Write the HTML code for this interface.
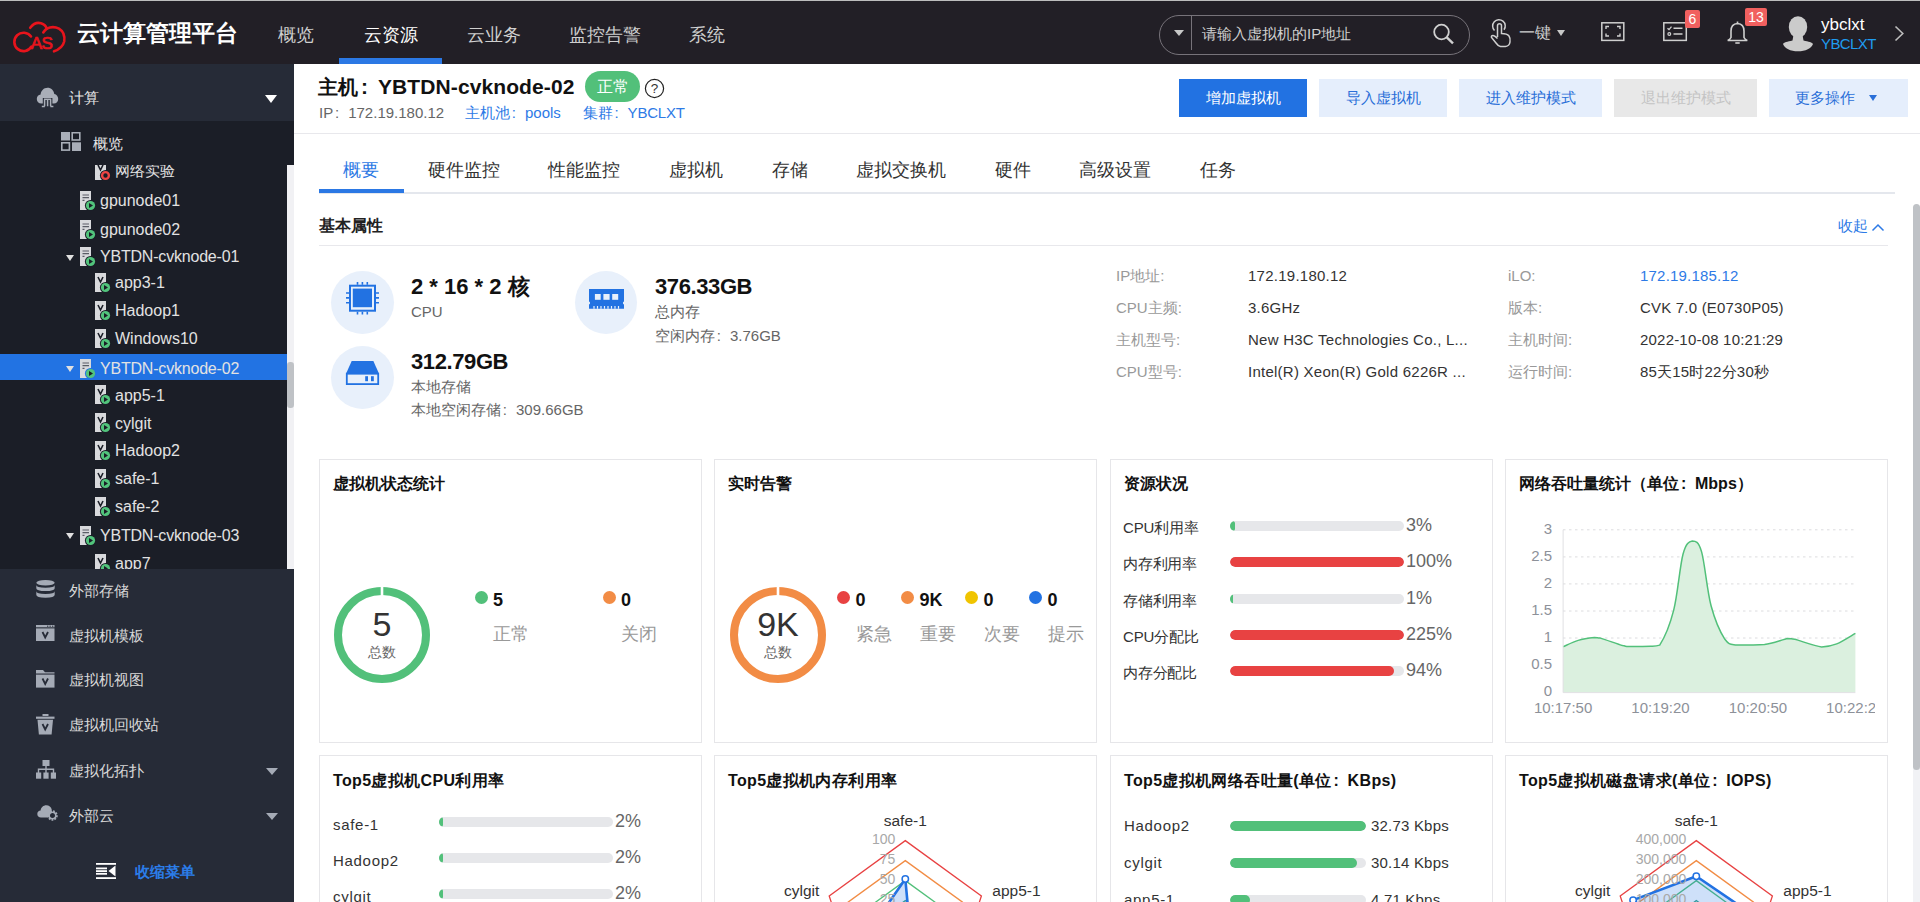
<!DOCTYPE html>
<html><head><meta charset="utf-8">
<style>
*{box-sizing:border-box;margin:0;padding:0}
html,body{width:1920px;height:902px;overflow:hidden;background:#fff;font-family:"Liberation Sans",sans-serif;color:#333}
.a{position:absolute;white-space:nowrap}
.fc{display:inline-block;width:1em;padding-left:0.12em}
#hdr{position:absolute;left:0;top:0;width:1920px;height:64px;background:#221f26}
#topline{position:absolute;left:0;top:0;width:1920px;height:1px;background:#bdbdbd}
.nav{position:absolute;top:22px;font-size:18px;line-height:26px;color:#cfcfcf}
#side{position:absolute;left:0;top:64px;width:294px;height:838px;background:#262b37}
#tree{position:absolute;left:0;top:121px;width:294px;height:448px;background:#1b1e27;overflow:hidden}
.ti{position:absolute;font-size:16px;line-height:20px;color:#e2e2e2;white-space:nowrap}
.mi{position:absolute;left:69px;font-size:15px;line-height:20px;color:#d8d8d8;white-space:nowrap}
</style></head><body>
<div class="a" style="left:294px;top:64px;width:1626px;height:838px;background:#fff"></div>
<div class="a" style="left:294px;top:133px;width:1626px;height:1px;background:#e8e8ec"></div>
<div class="a" style="left:318px;top:72px;font-size:20px;line-height:30px;font-weight:bold;color:#111">主机</div>
<div class="a" style="left:361px;top:71.6px;font-size:21px;line-height:30px;font-weight:bold;color:#111">:</div>
<div class="a" style="left:378px;top:71.6px;font-size:21px;line-height:30px;font-weight:bold;color:#111;letter-spacing:0.1px">YBTDN-cvknode-02</div>
<div class="a" style="left:585px;top:71px;width:55px;height:31px;border-radius:15.5px;background:#52c07a;color:#fff;font-size:16px;line-height:32px;text-align:center">正常</div>
<svg class="a" style="left:644px;top:78px" width="21" height="21" viewBox="0 0 21 21"><circle cx="10.5" cy="10.5" r="9.1" fill="none" stroke="#222" stroke-width="1.2"/><text x="10.5" y="15.3" text-anchor="middle" font-family="Liberation Sans" font-size="13.5" fill="#333">?</text></svg>
<div class="a" style="left:319px;top:103px;font-size:15px;line-height:20px;color:#666">IP<span class="fc">:</span>172.19.180.12</div>
<div class="a" style="left:465px;top:103px;font-size:15px;line-height:20px;color:#2d7ae6">主机池<span class="fc">:</span>pools</div>
<div class="a" style="left:583px;top:103px;font-size:15px;line-height:20px;color:#2d7ae6;letter-spacing:-0.2px">集群<span class="fc">:</span>YBCLXT</div>
<div class="a" style="left:1179px;top:79px;width:128px;height:38px;background:#2272e2;color:#fff;font-size:15px;line-height:38px;text-align:center;font-weight:500;">增加虚拟机</div>
<div class="a" style="left:1319px;top:79px;width:128px;height:38px;background:#e5eefc;color:#2a6fd8;font-size:15px;line-height:38px;text-align:center;">导入虚拟机</div>
<div class="a" style="left:1459px;top:79px;width:143px;height:38px;background:#e5eefc;color:#2a6fd8;font-size:15px;line-height:38px;text-align:center;">进入维护模式</div>
<div class="a" style="left:1614px;top:79px;width:143px;height:38px;background:#e8e8e8;color:#c4c4c4;font-size:15px;line-height:38px;text-align:center;">退出维护模式</div>
<div class="a" style="left:1769px;top:79px;width:139px;height:38px;background:#e5eefc;color:#2a6fd8;font-size:15px;line-height:38px;padding-left:26px">更多操作</div>
<div class="a" style="left:1869px;top:95px;width:0;height:0;border-left:4.5px solid transparent;border-right:4.5px solid transparent;border-top:6px solid #2a6fd8"></div>
<div class="a" style="left:319px;top:192px;width:1576px;height:2px;background:#e4e7ed"></div>
<div class="a" style="left:319.00px;top:157px;width:84.60px;text-align:center;font-size:18px;line-height:26px;color:#2b78e4">概要</div>
<div class="a" style="left:319.00px;top:189px;width:84.60px;height:4px;background:#2b78e4"></div>
<div class="a" style="left:403.60px;top:157px;width:120.60px;text-align:center;font-size:18px;line-height:26px;color:#333">硬件监控</div>
<div class="a" style="left:524.20px;top:157px;width:120.60px;text-align:center;font-size:18px;line-height:26px;color:#333">性能监控</div>
<div class="a" style="left:644.80px;top:157px;width:102.60px;text-align:center;font-size:18px;line-height:26px;color:#333">虚拟机</div>
<div class="a" style="left:747.40px;top:157px;width:84.60px;text-align:center;font-size:18px;line-height:26px;color:#333">存储</div>
<div class="a" style="left:832.00px;top:157px;width:138.60px;text-align:center;font-size:18px;line-height:26px;color:#333">虚拟交换机</div>
<div class="a" style="left:970.60px;top:157px;width:84.60px;text-align:center;font-size:18px;line-height:26px;color:#333">硬件</div>
<div class="a" style="left:1055.20px;top:157px;width:120.60px;text-align:center;font-size:18px;line-height:26px;color:#333">高级设置</div>
<div class="a" style="left:1175.80px;top:157px;width:84.60px;text-align:center;font-size:18px;line-height:26px;color:#333">任务</div>
<div class="a" style="left:319px;top:216px;font-size:16px;line-height:20px;font-weight:bold;color:#222">基本属性</div>
<div class="a" style="left:1838px;top:216px;font-size:15px;line-height:20px;color:#2d7ae6">收起</div>
<svg class="a" style="left:1871px;top:222px" width="14" height="10" viewBox="0 0 14 10"><path d="M1.5 8.5 L7 3 L12.5 8.5" fill="none" stroke="#2d7ae6" stroke-width="1.5"/></svg>
<div class="a" style="left:319px;top:245px;width:1569px;height:1px;background:#e8e8ec"></div>
<div class="a" style="left:331px;top:271px;width:63px;height:63px;border-radius:50%;background:#e8f0fb"></div>
<div class="a" style="left:575px;top:271px;width:62px;height:63px;border-radius:50%;background:#e8f0fb"></div>
<div class="a" style="left:331px;top:346px;width:63px;height:63px;border-radius:50%;background:#e8f0fb"></div>
<svg class="a" style="left:345px;top:281px" width="35" height="35" viewBox="0 0 35 35"><rect x="5" y="4.7" width="25" height="25" fill="none" stroke="#2272e2" stroke-width="2"/><rect x="7.8" y="7.6" width="19.2" height="18.6" fill="#2272e2"/><path d="M12.5 1 V3.7 M17.4 1 V3.7 M22.3 1 V3.7 M12.5 30.7 V33.5 M17.4 30.7 V33.5 M22.3 30.7 V33.5 M1 12 H4 M1 16.9 H4 M1 21.8 H4 M31 12 H34 M31 16.9 H34 M31 21.8 H34" stroke="#2272e2" stroke-width="1.6"/></svg>
<svg class="a" style="left:588px;top:288px" width="37" height="22" viewBox="0 0 37 22"><path d="M1 1 H36 V13.5 A1.6 1.6 0 0 0 36 16.5 V20.7 H1 V16.5 A1.6 1.6 0 0 0 1 13.5 Z" fill="#2272e2"/><rect x="6.9" y="6" width="5.8" height="5.8" fill="#e8f0fb"/><rect x="15.4" y="6" width="6.2" height="5.8" fill="#e8f0fb"/><rect x="24.2" y="6" width="6" height="5.8" fill="#e8f0fb"/><path d="M6 18 V20.7 M9.5 18 V20.7 M13 18 V20.7 M16.5 18 V20.7 M20 18 V20.7 M23.5 18 V20.7 M27 18 V20.7 M30.5 18 V20.7" stroke="#e8f0fb" stroke-width="1.2"/></svg>
<svg class="a" style="left:345px;top:360px" width="35" height="26" viewBox="0 0 35 26"><path d="M6.7 1 H28.4 L34 13.7 H1 Z" fill="#2272e2"/><rect x="1.8" y="13.7" width="31.4" height="10.4" fill="none" stroke="#2272e2" stroke-width="1.8"/><rect x="20.2" y="16.2" width="2.8" height="5" fill="#2272e2"/><rect x="26" y="16.2" width="2.8" height="5" fill="#2272e2"/></svg>
<div class="a" style="left:411px;top:273px;font-size:22px;line-height:28px;font-weight:bold;color:#111">2 * 16 * 2 核</div>
<div class="a" style="left:411px;top:302px;font-size:15px;line-height:20px;color:#666">CPU</div>
<div class="a" style="left:655px;top:273px;font-size:22px;line-height:28px;font-weight:bold;color:#111;letter-spacing:-0.4px">376.33GB</div>
<div class="a" style="left:655px;top:302px;font-size:15px;line-height:20px;color:#666">总内存</div>
<div class="a" style="left:655px;top:326px;font-size:15px;line-height:20px;color:#666">空闲内存<span class="fc">:</span>3.76GB</div>
<div class="a" style="left:411px;top:348px;font-size:22px;line-height:28px;font-weight:bold;color:#111;letter-spacing:-0.4px">312.79GB</div>
<div class="a" style="left:411px;top:377px;font-size:15px;line-height:20px;color:#666">本地存储</div>
<div class="a" style="left:411px;top:400px;font-size:15px;line-height:20px;color:#666">本地空闲存储<span class="fc">:</span>309.66GB</div>
<div class="a" style="left:1116px;top:265.5px;font-size:15px;line-height:20px;color:#999">IP地址:</div>
<div class="a" style="left:1248px;top:265.5px;font-size:15px;line-height:20px;color:#333;letter-spacing:0.25px">172.19.180.12</div>
<div class="a" style="left:1508px;top:265.5px;font-size:15px;line-height:20px;color:#999">iLO:</div>
<div class="a" style="left:1640px;top:265.5px;font-size:15px;line-height:20px;color:#2d7ae6;letter-spacing:0.2px">172.19.185.12</div>
<div class="a" style="left:1116px;top:297.8px;font-size:15px;line-height:20px;color:#999">CPU主频:</div>
<div class="a" style="left:1248px;top:297.8px;font-size:15px;line-height:20px;color:#333;letter-spacing:0.25px">3.6GHz</div>
<div class="a" style="left:1508px;top:297.8px;font-size:15px;line-height:20px;color:#999">版本:</div>
<div class="a" style="left:1640px;top:297.8px;font-size:15px;line-height:20px;color:#333;letter-spacing:0.2px">CVK 7.0 (E0730P05)</div>
<div class="a" style="left:1116px;top:330.1px;font-size:15px;line-height:20px;color:#999">主机型号:</div>
<div class="a" style="left:1248px;top:330.1px;font-size:15px;line-height:20px;color:#333;letter-spacing:0.25px">New H3C Technologies Co., L...</div>
<div class="a" style="left:1508px;top:330.1px;font-size:15px;line-height:20px;color:#999">主机时间:</div>
<div class="a" style="left:1640px;top:330.1px;font-size:15px;line-height:20px;color:#333;letter-spacing:0.2px">2022-10-08 10:21:29</div>
<div class="a" style="left:1116px;top:362.4px;font-size:15px;line-height:20px;color:#999">CPU型号:</div>
<div class="a" style="left:1248px;top:362.4px;font-size:15px;line-height:20px;color:#333;letter-spacing:0.25px">Intel(R) Xeon(R) Gold 6226R ...</div>
<div class="a" style="left:1508px;top:362.4px;font-size:15px;line-height:20px;color:#999">运行时间:</div>
<div class="a" style="left:1640px;top:362.4px;font-size:15px;line-height:20px;color:#333;letter-spacing:0.2px">85天15时22分30秒</div>
<div class="a" style="left:319px;top:459px;width:383px;height:284px;border:1px solid #e6e6e9"></div>
<div class="a" style="left:319px;top:755px;width:383px;height:200px;border:1px solid #e6e6e9"></div>
<div class="a" style="left:714px;top:459px;width:383px;height:284px;border:1px solid #e6e6e9"></div>
<div class="a" style="left:714px;top:755px;width:383px;height:200px;border:1px solid #e6e6e9"></div>
<div class="a" style="left:1110px;top:459px;width:383px;height:284px;border:1px solid #e6e6e9"></div>
<div class="a" style="left:1110px;top:755px;width:383px;height:200px;border:1px solid #e6e6e9"></div>
<div class="a" style="left:1505px;top:459px;width:383px;height:284px;border:1px solid #e6e6e9"></div>
<div class="a" style="left:1505px;top:755px;width:383px;height:200px;border:1px solid #e6e6e9"></div>
<div class="a" style="left:333px;top:474px;font-size:16px;line-height:20px;font-weight:bold;color:#111">虚拟机状态统计</div>
<div class="a" style="left:728px;top:474px;font-size:16px;line-height:20px;font-weight:bold;color:#111">实时告警</div>
<div class="a" style="left:1124px;top:474px;font-size:16px;line-height:20px;font-weight:bold;color:#111">资源状况</div>
<div class="a" style="left:1519px;top:474px;font-size:16px;line-height:20px;font-weight:bold;color:#111">网络吞吐量统计（单位<span class="fc">:</span>Mbps）</div>
<div class="a" style="left:333px;top:771px;font-size:16px;line-height:20px;font-weight:bold;color:#111;letter-spacing:0.35px">Top5虚拟机CPU利用率</div>
<div class="a" style="left:728px;top:771px;font-size:16px;line-height:20px;font-weight:bold;color:#111;letter-spacing:0.35px">Top5虚拟机内存利用率</div>
<div class="a" style="left:1124px;top:771px;font-size:16px;line-height:20px;font-weight:bold;color:#111;letter-spacing:0.35px">Top5虚拟机网络吞吐量(单位<span class="fc">:</span>KBps)</div>
<div class="a" style="left:1519px;top:771px;font-size:16px;line-height:20px;font-weight:bold;color:#111;letter-spacing:0.35px">Top5虚拟机磁盘请求(单位<span class="fc">:</span>IOPS)</div>
<svg class="a" style="left:332px;top:584.5px" width="100" height="100" viewBox="0 0 100 100"><circle cx="50" cy="50" r="44" fill="none" stroke="#52c07a" stroke-width="8"/><rect x="48.7" y="0" width="2.6" height="12" fill="#fff"/></svg>
<div class="a" style="left:332px;top:603.5px;width:100px;text-align:center;font-size:34px;line-height:40px;color:#333">5</div>
<div class="a" style="left:332px;top:641.5px;width:100px;text-align:center;font-size:14px;line-height:20px;color:#666">总数</div>
<svg class="a" style="left:728px;top:584.5px" width="100" height="100" viewBox="0 0 100 100"><circle cx="50" cy="50" r="44" fill="none" stroke="#f28c45" stroke-width="8"/><rect x="48.7" y="0" width="2.6" height="12" fill="#fff"/></svg>
<div class="a" style="left:728px;top:603.5px;width:100px;text-align:center;font-size:34px;line-height:40px;color:#333">9K</div>
<div class="a" style="left:728px;top:641.5px;width:100px;text-align:center;font-size:14px;line-height:20px;color:#666">总数</div>
<div class="a" style="left:474.5px;top:590.5px;width:13px;height:13px;border-radius:50%;background:#52c07a"></div>
<div class="a" style="left:493px;top:588px;font-size:18px;line-height:24px;font-weight:bold;color:#111">5</div>
<div class="a" style="left:493px;top:622px;font-size:18px;line-height:24px;color:#999">正常</div>
<div class="a" style="left:602.5px;top:590.5px;width:13px;height:13px;border-radius:50%;background:#f28c45"></div>
<div class="a" style="left:621px;top:588px;font-size:18px;line-height:24px;font-weight:bold;color:#111">0</div>
<div class="a" style="left:621px;top:622px;font-size:18px;line-height:24px;color:#999">关闭</div>
<div class="a" style="left:837.0px;top:590.5px;width:13px;height:13px;border-radius:50%;background:#e84242"></div>
<div class="a" style="left:855.5px;top:588px;font-size:18px;line-height:24px;font-weight:bold;color:#111">0</div>
<div class="a" style="left:855.5px;top:622px;font-size:18px;line-height:24px;color:#999">紧急</div>
<div class="a" style="left:901.0px;top:590.5px;width:13px;height:13px;border-radius:50%;background:#f28c45"></div>
<div class="a" style="left:919.5px;top:588px;font-size:18px;line-height:24px;font-weight:bold;color:#111">9K</div>
<div class="a" style="left:919.5px;top:622px;font-size:18px;line-height:24px;color:#999">重要</div>
<div class="a" style="left:965.0px;top:590.5px;width:13px;height:13px;border-radius:50%;background:#f0c400"></div>
<div class="a" style="left:983.5px;top:588px;font-size:18px;line-height:24px;font-weight:bold;color:#111">0</div>
<div class="a" style="left:983.5px;top:622px;font-size:18px;line-height:24px;color:#999">次要</div>
<div class="a" style="left:1029.0px;top:590.5px;width:13px;height:13px;border-radius:50%;background:#2272e2"></div>
<div class="a" style="left:1047.5px;top:588px;font-size:18px;line-height:24px;font-weight:bold;color:#111">0</div>
<div class="a" style="left:1047.5px;top:622px;font-size:18px;line-height:24px;color:#999">提示</div>
<div class="a" style="left:1123px;top:518.0px;font-size:15px;line-height:20px;color:#333;letter-spacing:-0.2px">CPU利用率</div>
<div class="a" style="left:1230px;top:521.0px;width:174px;height:10px;border-radius:5px;background:#e6e7ea;overflow:hidden"><div style="width:5.2px;height:10px;border-radius:5px;background:#52c07a"></div></div>
<div class="a" style="left:1406px;top:513.0px;font-size:18px;line-height:24px;color:#666">3%</div>
<div class="a" style="left:1123px;top:554.3px;font-size:15px;line-height:20px;color:#333;letter-spacing:-0.2px">内存利用率</div>
<div class="a" style="left:1230px;top:557.3px;width:174px;height:10px;border-radius:5px;background:#e6e7ea;overflow:hidden"><div style="width:174.0px;height:10px;border-radius:5px;background:#e84242"></div></div>
<div class="a" style="left:1406px;top:549.3px;font-size:18px;line-height:24px;color:#666">100%</div>
<div class="a" style="left:1123px;top:590.6px;font-size:15px;line-height:20px;color:#333;letter-spacing:-0.2px">存储利用率</div>
<div class="a" style="left:1230px;top:593.6px;width:174px;height:10px;border-radius:5px;background:#e6e7ea;overflow:hidden"><div style="width:3.0px;height:10px;border-radius:5px;background:#52c07a"></div></div>
<div class="a" style="left:1406px;top:585.6px;font-size:18px;line-height:24px;color:#666">1%</div>
<div class="a" style="left:1123px;top:626.9px;font-size:15px;line-height:20px;color:#333;letter-spacing:-0.2px">CPU分配比</div>
<div class="a" style="left:1230px;top:629.9px;width:174px;height:10px;border-radius:5px;background:#e6e7ea;overflow:hidden"><div style="width:174.0px;height:10px;border-radius:5px;background:#e84242"></div></div>
<div class="a" style="left:1406px;top:621.9px;font-size:18px;line-height:24px;color:#666">225%</div>
<div class="a" style="left:1123px;top:663.2px;font-size:15px;line-height:20px;color:#333;letter-spacing:-0.2px">内存分配比</div>
<div class="a" style="left:1230px;top:666.2px;width:174px;height:10px;border-radius:5px;background:#e6e7ea;overflow:hidden"><div style="width:163.6px;height:10px;border-radius:5px;background:#e84242"></div></div>
<div class="a" style="left:1406px;top:658.2px;font-size:18px;line-height:24px;color:#666">94%</div>
<div class="a" style="left:333px;top:815.0px;font-size:15px;line-height:20px;color:#333;letter-spacing:0.7px">safe-1</div>
<div class="a" style="left:439px;top:817.0px;width:174px;height:10px;border-radius:5px;background:#e6e7ea;overflow:hidden"><div style="width:4px;height:10px;border-radius:5px;background:#52c07a"></div></div>
<div class="a" style="left:615px;top:809.0px;font-size:18px;line-height:24px;color:#666">2%</div>
<div class="a" style="left:333px;top:851.0px;font-size:15px;line-height:20px;color:#333;letter-spacing:0.7px">Hadoop2</div>
<div class="a" style="left:439px;top:853.0px;width:174px;height:10px;border-radius:5px;background:#e6e7ea;overflow:hidden"><div style="width:4px;height:10px;border-radius:5px;background:#52c07a"></div></div>
<div class="a" style="left:615px;top:845.0px;font-size:18px;line-height:24px;color:#666">2%</div>
<div class="a" style="left:333px;top:887.0px;font-size:15px;line-height:20px;color:#333;letter-spacing:0.7px">cylgit</div>
<div class="a" style="left:439px;top:889.0px;width:174px;height:10px;border-radius:5px;background:#e6e7ea;overflow:hidden"><div style="width:4px;height:10px;border-radius:5px;background:#52c07a"></div></div>
<div class="a" style="left:615px;top:881.0px;font-size:18px;line-height:24px;color:#666">2%</div>
<div class="a" style="left:1124px;top:815.5px;font-size:15px;line-height:20px;color:#333;letter-spacing:0.7px">Hadoop2</div>
<div class="a" style="left:1230px;top:820.5px;width:136px;height:10px;border-radius:5px;background:#e6e7ea;overflow:hidden"><div style="width:136.0px;height:10px;border-radius:5px;background:#52c07a"></div></div>
<div class="a" style="left:1371px;top:815.5px;font-size:15px;line-height:20px;color:#333;letter-spacing:0.2px">32.73 Kbps</div>
<div class="a" style="left:1124px;top:852.8px;font-size:15px;line-height:20px;color:#333;letter-spacing:0.7px">cylgit</div>
<div class="a" style="left:1230px;top:857.8px;width:136px;height:10px;border-radius:5px;background:#e6e7ea;overflow:hidden"><div style="width:126.5px;height:10px;border-radius:5px;background:#52c07a"></div></div>
<div class="a" style="left:1371px;top:852.8px;font-size:15px;line-height:20px;color:#333;letter-spacing:0.2px">30.14 Kbps</div>
<div class="a" style="left:1124px;top:890.1px;font-size:15px;line-height:20px;color:#333;letter-spacing:0.7px">app5-1</div>
<div class="a" style="left:1230px;top:895.1px;width:136px;height:10px;border-radius:5px;background:#e6e7ea;overflow:hidden"><div style="width:20.4px;height:10px;border-radius:5px;background:#52c07a"></div></div>
<div class="a" style="left:1371px;top:890.1px;font-size:15px;line-height:20px;color:#333;letter-spacing:0.2px">4.71 Kbps</div>
<div class="a" style="left:1505px;top:459px;width:370px;height:284px;overflow:hidden"><svg class="a" style="left:0;top:0" width="383" height="284" viewBox="0 0 383 284"><text x="47" y="236.9" text-anchor="end" font-family="Liberation Sans" font-size="15" fill="#8d9199">0</text><path d="M58 206.1 H350.4" stroke="#dcdcdf" stroke-width="1" stroke-dasharray="2.5 3.5"/><text x="47" y="209.9" text-anchor="end" font-family="Liberation Sans" font-size="15" fill="#8d9199">0.5</text><path d="M58 179.0 H350.4" stroke="#dcdcdf" stroke-width="1" stroke-dasharray="2.5 3.5"/><text x="47" y="182.8" text-anchor="end" font-family="Liberation Sans" font-size="15" fill="#8d9199">1</text><path d="M58 152.0 H350.4" stroke="#dcdcdf" stroke-width="1" stroke-dasharray="2.5 3.5"/><text x="47" y="155.8" text-anchor="end" font-family="Liberation Sans" font-size="15" fill="#8d9199">1.5</text><path d="M58 124.9 H350.4" stroke="#dcdcdf" stroke-width="1" stroke-dasharray="2.5 3.5"/><text x="47" y="128.7" text-anchor="end" font-family="Liberation Sans" font-size="15" fill="#8d9199">2</text><path d="M58 97.9 H350.4" stroke="#dcdcdf" stroke-width="1" stroke-dasharray="2.5 3.5"/><text x="47" y="101.7" text-anchor="end" font-family="Liberation Sans" font-size="15" fill="#8d9199">2.5</text><path d="M58 70.8 H350.4" stroke="#dcdcdf" stroke-width="1" stroke-dasharray="2.5 3.5"/><text x="47" y="74.6" text-anchor="end" font-family="Liberation Sans" font-size="15" fill="#8d9199">3</text><path d="M58.1 187.7 C60.6 186.7 68.0 182.9 73.2 181.4 C78.4 179.9 85.8 179.0 89.5 178.6 C93.2 178.6 90.6 178.6 95.3 179.1 C100.0 180.4 112.6 185.1 117.5 186.5 C122.4 187.5 119.8 187.4 124.5 187.5 C129.2 187.5 140.4 187.5 145.4 187.3 C150.4 187.1 150.8 187.3 154.7 186.1 C158.6 180.1 164.8 166.3 168.7 151.1 C172.6 136.0 174.9 106.7 178.0 95.2 C181.1 83.7 184.2 82.4 187.3 82.0 C190.4 82.0 193.5 82.1 196.6 92.9 C199.7 103.6 202.1 131.9 206.0 146.5 C209.9 161.1 215.6 173.7 219.9 180.3 C224.2 186.1 225.0 185.2 231.6 186.1 C238.2 186.1 251.0 186.1 259.5 185.6 C268.0 184.5 277.7 180.5 282.8 179.6 C287.8 179.6 284.2 179.6 289.8 180.3 C295.4 181.7 309.6 187.1 316.6 187.9 C323.6 187.9 326.1 187.1 331.7 184.9 C337.3 182.6 347.3 176.1 350.4 174.4 L350.4000000000001 233.10000000000002 L58.09999999999991 233.10000000000002 Z" fill="#dbf0df"/><path d="M58.1 187.7 C60.6 186.7 68.0 182.9 73.2 181.4 C78.4 179.9 85.8 179.0 89.5 178.6 C93.2 178.6 90.6 178.6 95.3 179.1 C100.0 180.4 112.6 185.1 117.5 186.5 C122.4 187.5 119.8 187.4 124.5 187.5 C129.2 187.5 140.4 187.5 145.4 187.3 C150.4 187.1 150.8 187.3 154.7 186.1 C158.6 180.1 164.8 166.3 168.7 151.1 C172.6 136.0 174.9 106.7 178.0 95.2 C181.1 83.7 184.2 82.4 187.3 82.0 C190.4 82.0 193.5 82.1 196.6 92.9 C199.7 103.6 202.1 131.9 206.0 146.5 C209.9 161.1 215.6 173.7 219.9 180.3 C224.2 186.1 225.0 185.2 231.6 186.1 C238.2 186.1 251.0 186.1 259.5 185.6 C268.0 184.5 277.7 180.5 282.8 179.6 C287.8 179.6 284.2 179.6 289.8 180.3 C295.4 181.7 309.6 187.1 316.6 187.9 C323.6 187.9 326.1 187.1 331.7 184.9 C337.3 182.6 347.3 176.1 350.4 174.4" fill="none" stroke="#52c07a" stroke-width="1.5"/><path d="M58.1 70.79999999999995 V233.60000000000002 H350.4" fill="none" stroke="#e0e0e3" stroke-width="1"/><text x="58.1" y="254" text-anchor="middle" font-family="Liberation Sans" font-size="15" fill="#8d9199">10:17:50</text><text x="155.5" y="254" text-anchor="middle" font-family="Liberation Sans" font-size="15" fill="#8d9199">10:19:20</text><text x="252.9" y="254" text-anchor="middle" font-family="Liberation Sans" font-size="15" fill="#8d9199">10:20:50</text><text x="350.3" y="254" text-anchor="middle" font-family="Liberation Sans" font-size="15" fill="#8d9199">10:22:20</text></svg></div>
<div class="a" style="left:714px;top:755px;width:383px;height:147px;overflow:hidden"><svg class="a" style="left:0;top:0" width="383" height="200" viewBox="0 0 383 200"><polygon points="191.3,85.6 267.4,140.9 238.3,230.3 144.3,230.3 115.2,140.9" fill="none" stroke="#e84242" stroke-width="1.3"/><polygon points="191.3,105.6 248.4,147.1 226.6,214.1 156.0,214.1 134.2,147.1" fill="none" stroke="#f28c45" stroke-width="1.3"/><polygon points="191.3,125.6 229.3,153.2 214.8,198.0 167.8,198.0 153.3,153.2" fill="none" stroke="#52c07a" stroke-width="1.3"/><polygon points="191.3,145.6 210.3,159.4 203.1,181.8 179.5,181.8 172.3,159.4" fill="none" stroke="#3aa58a" stroke-width="1.3"/><polygon points="191.3,124.0 195.1,164.4 196.0,172.1 181.9,178.5 167.7,157.9" fill="rgba(34,114,226,0.22)" stroke="#2272e2" stroke-width="2.6" stroke-linejoin="round"/><circle cx="191.3" cy="124.0" r="3.2" fill="#fff" stroke="#2272e2" stroke-width="1.5"/><circle cx="195.1" cy="164.4" r="3.2" fill="#fff" stroke="#2272e2" stroke-width="1.5"/><circle cx="196.0" cy="172.1" r="3.2" fill="#fff" stroke="#2272e2" stroke-width="1.5"/><circle cx="181.9" cy="178.5" r="3.2" fill="#fff" stroke="#2272e2" stroke-width="1.5"/><circle cx="167.7" cy="157.9" r="3.2" fill="#fff" stroke="#2272e2" stroke-width="1.5"/><text x="181.3" y="89.1" text-anchor="end" font-family="Liberation Sans" font-size="14" fill="#a8a8a8">100</text><text x="181.3" y="109.1" text-anchor="end" font-family="Liberation Sans" font-size="14" fill="#a8a8a8">75</text><text x="181.3" y="129.1" text-anchor="end" font-family="Liberation Sans" font-size="14" fill="#a8a8a8">50</text><text x="181.3" y="149.1" text-anchor="end" font-family="Liberation Sans" font-size="14" fill="#a8a8a8">25</text><text x="191.3" y="70.8" text-anchor="middle" font-family="Liberation Sans" font-size="15.5" fill="#333">safe-1</text><text x="105.3" y="140.6" text-anchor="end" font-family="Liberation Sans" font-size="15.5" fill="#333">cylgit</text><text x="278.3" y="140.6" text-anchor="start" font-family="Liberation Sans" font-size="15.5" fill="#333">app5-1</text></svg></div>
<div class="a" style="left:1505px;top:755px;width:383px;height:147px;overflow:hidden"><svg class="a" style="left:0;top:0" width="383" height="200" viewBox="0 0 383 200"><polygon points="191.3,85.6 267.4,140.9 238.3,230.3 144.3,230.3 115.2,140.9" fill="none" stroke="#e84242" stroke-width="1.3"/><polygon points="191.3,105.6 248.4,147.1 226.6,214.1 156.0,214.1 134.2,147.1" fill="none" stroke="#f28c45" stroke-width="1.3"/><polygon points="191.3,125.6 229.3,153.2 214.8,198.0 167.8,198.0 153.3,153.2" fill="none" stroke="#52c07a" stroke-width="1.3"/><polygon points="191.3,145.6 210.3,159.4 203.1,181.8 179.5,181.8 172.3,159.4" fill="none" stroke="#3aa58a" stroke-width="1.3"/><polygon points="191.3,121.2 235.4,151.3 205.4,185.0 177.2,185.0 128.1,145.1" fill="rgba(34,114,226,0.22)" stroke="#2272e2" stroke-width="2.6" stroke-linejoin="round"/><circle cx="191.3" cy="121.2" r="3.2" fill="#fff" stroke="#2272e2" stroke-width="1.5"/><circle cx="235.4" cy="151.3" r="3.2" fill="#fff" stroke="#2272e2" stroke-width="1.5"/><circle cx="205.4" cy="185.0" r="3.2" fill="#fff" stroke="#2272e2" stroke-width="1.5"/><circle cx="177.2" cy="185.0" r="3.2" fill="#fff" stroke="#2272e2" stroke-width="1.5"/><circle cx="128.1" cy="145.1" r="3.2" fill="#fff" stroke="#2272e2" stroke-width="1.5"/><text x="181.3" y="89.1" text-anchor="end" font-family="Liberation Sans" font-size="14" fill="#a8a8a8">400,000</text><text x="181.3" y="109.1" text-anchor="end" font-family="Liberation Sans" font-size="14" fill="#a8a8a8">300,000</text><text x="181.3" y="129.1" text-anchor="end" font-family="Liberation Sans" font-size="14" fill="#a8a8a8">200,000</text><text x="181.3" y="149.1" text-anchor="end" font-family="Liberation Sans" font-size="14" fill="#a8a8a8">100,000</text><text x="191.3" y="70.8" text-anchor="middle" font-family="Liberation Sans" font-size="15.5" fill="#333">safe-1</text><text x="105.3" y="140.6" text-anchor="end" font-family="Liberation Sans" font-size="15.5" fill="#333">cylgit</text><text x="278.3" y="140.6" text-anchor="start" font-family="Liberation Sans" font-size="15.5" fill="#333">app5-1</text></svg></div>
<div class="a" style="left:1912px;top:134px;width:8px;height:768px;background:#fff"></div>
<div class="a" style="left:1913px;top:740px;width:7px;height:162px;background:#f1f2f5"></div>
<div class="a" style="left:1913px;top:204px;width:7px;height:566px;background:#bfc2c6;border-radius:3.5px"></div>
<!-- HEADER -->
<div id="hdr">
 <svg class="a" style="left:8px;top:16px" width="64" height="40" viewBox="0 0 64 40">
  <g fill="none" stroke="#e8141c" stroke-width="2.6" stroke-linecap="round">
   <path d="M23 20.5 A9.2 9.2 0 1 0 23.5 30.5"/>
   <path d="M22.2 11.8 Q27 5.5 33 7.2 Q37.5 8.6 38.8 12.6 Q37 14 35.3 16.5"/>
   <path d="M38.8 12.6 Q45 9.6 51 12.6 Q57.5 16.5 56.2 25.5 Q54.6 32.2 46 35.3"/>
  </g>
  <text x="22.8" y="32.6" font-family="Liberation Sans" font-size="17" fill="#e8141c" stroke="#e8141c" stroke-width="0.7" letter-spacing="-0.6">AS</text>
 </svg>
 <div class="a" style="left:77px;top:18px;font-size:22.5px;line-height:32px;font-weight:900;color:#fff">云计算管理平台</div>
 <div class="nav" style="left:278px">概览</div>
 <div class="nav" style="left:364px;color:#fff">云资源</div>
 <div class="nav" style="left:467px">云业务</div>
 <div class="nav" style="left:569px">监控告警</div>
 <div class="nav" style="left:689px">系统</div>
 <div class="a" style="left:339px;top:58px;width:103px;height:6px;background:#2b78e4"></div>
 <!-- search -->
 <div class="a" style="left:1159px;top:15px;width:311px;height:40px;border:1px solid #77737a;border-radius:20px"></div>
 <div class="a" style="left:1191px;top:16px;width:1px;height:34px;background:#77737a"></div>
 <div class="a" style="left:1174px;top:30px;width:0;height:0;border-left:5px solid transparent;border-right:5px solid transparent;border-top:6px solid #c8c8c8"></div>
 <div class="a" style="left:1202px;top:24px;font-size:15px;line-height:20px;color:#cfcfcf">请输入虚拟机的IP地址</div>
 <svg class="a" style="left:1432px;top:23px" width="24" height="22" viewBox="0 0 24 22"><circle cx="9.5" cy="9" r="7.3" fill="none" stroke="#d0d0d0" stroke-width="1.8"/><path d="M14.8 14.3 L21 20.3" stroke="#d0d0d0" stroke-width="2.4"/></svg>
 <!-- touch icon -->
 <svg class="a" style="left:1489px;top:18px" width="24" height="30" viewBox="0 0 24 30" fill="none" stroke="#cfcfcf" stroke-width="1.5">
  <path d="M5.5 12.5 A6.3 6.3 0 1 1 15 11.8"/>
  <path d="M8.5 19 V7.8 A2 2 0 0 1 12.5 7.8 V15.5 Q18 15.5 20 18 Q21.5 20 21 24 Q20.5 28 16.5 28.5 H11.5 Q9 28 7 25 L2.5 19.5 Q2 17.5 4 17.5 Q5.5 17.5 8.5 20.5"/>
 </svg>
 <div class="a" style="left:1519px;top:22px;font-size:16px;line-height:22px;color:#cfcfcf">一键</div>
 <div class="a" style="left:1557px;top:30px;width:0;height:0;border-left:4.5px solid transparent;border-right:4.5px solid transparent;border-top:6px solid #c8c8c8"></div>
 <!-- fullscreen -->
 <svg class="a" style="left:1601px;top:22px" width="24" height="20" viewBox="0 0 24 20" fill="none" stroke="#cfcfcf">
  <rect x="0.8" y="0.8" width="22" height="17.6" stroke-width="1.5"/>
  <path d="M5 7 V4.5 H8 M16 4.5 H19 V7 M19 11.5 V14 H16 M8 14 H5 V11.5" stroke-width="1.4"/>
 </svg>
 <!-- list -->
 <svg class="a" style="left:1663px;top:22px" width="25" height="20" viewBox="0 0 25 20" fill="none" stroke="#cfcfcf">
  <rect x="0.8" y="0.8" width="22.5" height="17.6" stroke-width="1.5"/>
  <path d="M4.5 6.2 L6 7.6 L8.5 4.6" stroke-width="1.3"/>
  <path d="M10.5 6.2 H19.5 M10.5 12 H19.5" stroke-width="1.5"/>
  <circle cx="6.3" cy="12" r="1.4" stroke-width="1.2"/>
 </svg>
 <div class="a" style="left:1685px;top:10px;width:15px;height:18px;background:#f1605f;border-radius:2px;color:#fff;font-size:14px;line-height:18px;text-align:center">6</div>
 <!-- bell -->
 <svg class="a" style="left:1727px;top:20px" width="22" height="25" viewBox="0 0 22 25" fill="none" stroke="#cfcfcf" stroke-width="1.6">
  <path d="M10.5 1.5 V3.2"/>
  <path d="M4 17.5 V11 Q4 4 10.5 3.5 Q17 4 17 11 V17.5 Q18 19.5 20.3 20.5 H0.7 Q3 19.5 4 17.5 Z"/>
  <path d="M8.3 23 H12.7"/>
 </svg>
 <div class="a" style="left:1745px;top:8px;width:22px;height:18px;background:#f1605f;border-radius:2px;color:#fff;font-size:14px;line-height:18px;text-align:center">13</div>
 <!-- avatar -->
 <svg class="a" style="left:1782px;top:16px" width="32" height="36" viewBox="0 0 32 36">
  <ellipse cx="16" cy="11" rx="9.2" ry="10.8" fill="#cbcbcb"/>
  <path d="M11.5 19 H20.5 L21.5 24.5 C26.5 25.5 30.5 26.5 31 28 C29.5 32.5 23.5 35.3 16 35.3 C8.5 35.3 2.5 32.5 1 28 C1.5 26.5 5.5 25.5 10.5 24.5 Z" fill="#cbcbcb"/>
 </svg>
 <div class="a" style="left:1821px;top:15px;font-size:17px;line-height:20px;color:#fff">ybclxt</div>
 <div class="a" style="left:1821px;top:35px;font-size:15px;line-height:18px;color:#1f9cf0;letter-spacing:-0.6px">YBCLXT</div>
 <svg class="a" style="left:1894px;top:25px" width="11" height="17" viewBox="0 0 11 17"><path d="M1.5 1.5 L8.8 8.5 L1.5 15.5" fill="none" stroke="#bdbdbd" stroke-width="1.6"/></svg>
</div>

<div id="side">
<svg class="a" style="left:36px;top:23px" width="24" height="21" viewBox="0 0 24 21"><path d="M5.5 16.5 C2.5 16.5 0.8 14.5 0.8 12 C0.8 9.5 2.6 7.8 4.6 7.6 C5 3.6 7.8 0.8 11.5 0.8 C15.2 0.8 17.8 3.5 18.3 7 C20.6 7.4 22.2 9.3 22.2 12 C22.2 14.5 20.5 16.5 17.8 16.5 Z" fill="#a9aeb8"/><rect x="6.8" y="11" width="9.6" height="10" fill="#262b37"/><path d="M8 12.2 H15.2 M8.6 12.2 V19.2 M11.6 12.2 V19.2 M14.6 12.2 V19.2 M5.8 19.4 H8.8 M14.4 19.4 H17.4" fill="none" stroke="#a9aeb8" stroke-width="1.5"/></svg>
<div class="a" style="left:69px;top:24px;font-size:15px;line-height:20px;color:#e6e6e6">计算</div>
<div class="a" style="left:265px;top:31px;width:0;height:0;border-left:6.8px solid transparent;border-right:6.8px solid transparent;border-top:8px solid #fff"></div>
</div>
<div id="tree">
<svg class="a" style="left:61px;top:11px" width="20" height="19" viewBox="0 0 20 19"><rect x="0" y="0" width="9" height="8.5" fill="#a9aeb8"/><rect x="11.2" y="0.7" width="7.6" height="7.3" fill="none" stroke="#a9aeb8" stroke-width="1.6"/><rect x="0.8" y="10.8" width="7.6" height="7.3" fill="none" stroke="#a9aeb8" stroke-width="1.6"/><rect x="11" y="10.3" width="9" height="8.7" fill="#a9aeb8"/></svg>
<div class="a" style="left:93px;top:13px;font-size:15px;line-height:20px;color:#e6e6e6">概览</div>
<div style="position:absolute;left:0;top:44px;width:294px;height:404px;overflow:hidden">
<svg class="a" style="left:95px;top:-3.9px" width="17" height="21" viewBox="0 0 17 21"><rect x="0" y="0" width="11" height="19" fill="#d8d9dc"/><path d="M3 4 L5.5 9 L8 4" fill="none" stroke="#1b1e27" stroke-width="1.6"/><circle cx="10.5" cy="14.5" r="5.6" fill="#1b1e27"/><circle cx="10.5" cy="14.5" r="3.4" fill="none" stroke="#ee4444" stroke-width="2.4"/><rect x="9.1" y="13.1" width="2.8" height="2.8" fill="#1b1e27"/></svg>
<div class="ti" style="left:115px;top:-3.8px;font-size:15px;">网络实验</div>
<svg class="a" style="left:80px;top:26.2px" width="17" height="21" viewBox="0 0 17 21"><rect x="0" y="0" width="11" height="19" fill="#d8d9dc"/><path d="M2.5 4 H9 M2.5 6.7 H9 M2.5 9.3 H4.5" stroke="#5a5d66" stroke-width="1.2"/><circle cx="10.5" cy="14.5" r="5.6" fill="#1b1e27"/><circle cx="10.5" cy="14.5" r="4.6" fill="#52c47c"/><path d="M9 12 L13 14.5 L9 17 Z" fill="#1b1e27"/></svg>
<div class="ti" style="left:100px;top:26.3px;">gpunode01</div>
<svg class="a" style="left:80px;top:54.6px" width="17" height="21" viewBox="0 0 17 21"><rect x="0" y="0" width="11" height="19" fill="#d8d9dc"/><path d="M2.5 4 H9 M2.5 6.7 H9 M2.5 9.3 H4.5" stroke="#5a5d66" stroke-width="1.2"/><circle cx="10.5" cy="14.5" r="5.6" fill="#1b1e27"/><circle cx="10.5" cy="14.5" r="4.6" fill="#52c47c"/><path d="M9 12 L13 14.5 L9 17 Z" fill="#1b1e27"/></svg>
<div class="ti" style="left:100px;top:54.7px;">gpunode02</div>
<div class="a" style="left:65.5px;top:89.5px;width:0;height:0;border-left:4.5px solid transparent;border-right:4.5px solid transparent;border-top:6px solid #e0e0e0"></div>
<svg class="a" style="left:80px;top:82.0px" width="17" height="21" viewBox="0 0 17 21"><rect x="0" y="0" width="11" height="19" fill="#d8d9dc"/><path d="M2.5 4 H9 M2.5 6.7 H9 M2.5 9.3 H4.5" stroke="#5a5d66" stroke-width="1.2"/><circle cx="10.5" cy="14.5" r="5.6" fill="#1b1e27"/><circle cx="10.5" cy="14.5" r="4.6" fill="#52c47c"/><path d="M9 12 L13 14.5 L9 17 Z" fill="#1b1e27"/></svg>
<div class="ti" style="left:100px;top:82.1px;letter-spacing:-0.2px;">YBTDN-cvknode-01</div>
<svg class="a" style="left:95px;top:108.1px" width="17" height="21" viewBox="0 0 17 21"><rect x="0" y="0" width="11" height="19" fill="#d8d9dc"/><path d="M3 4 L5.5 9 L8 4" fill="none" stroke="#1b1e27" stroke-width="1.6"/><circle cx="10.5" cy="14.5" r="5.6" fill="#1b1e27"/><circle cx="10.5" cy="14.5" r="4.6" fill="#52c47c"/><path d="M9 12 L13 14.5 L9 17 Z" fill="#1b1e27"/></svg>
<div class="ti" style="left:115px;top:108.2px;">app3-1</div>
<svg class="a" style="left:95px;top:136.1px" width="17" height="21" viewBox="0 0 17 21"><rect x="0" y="0" width="11" height="19" fill="#d8d9dc"/><path d="M3 4 L5.5 9 L8 4" fill="none" stroke="#1b1e27" stroke-width="1.6"/><circle cx="10.5" cy="14.5" r="5.6" fill="#1b1e27"/><circle cx="10.5" cy="14.5" r="4.6" fill="#52c47c"/><path d="M9 12 L13 14.5 L9 17 Z" fill="#1b1e27"/></svg>
<div class="ti" style="left:115px;top:136.2px;">Hadoop1</div>
<svg class="a" style="left:95px;top:164.0px" width="17" height="21" viewBox="0 0 17 21"><rect x="0" y="0" width="11" height="19" fill="#d8d9dc"/><path d="M3 4 L5.5 9 L8 4" fill="none" stroke="#1b1e27" stroke-width="1.6"/><circle cx="10.5" cy="14.5" r="5.6" fill="#1b1e27"/><circle cx="10.5" cy="14.5" r="4.6" fill="#52c47c"/><path d="M9 12 L13 14.5 L9 17 Z" fill="#1b1e27"/></svg>
<div class="ti" style="left:115px;top:164.1px;">Windows10</div>
<div class="a" style="left:0;top:189.0px;width:287px;height:26px;background:#2273e3"></div>
<div class="a" style="left:65.5px;top:201.0px;width:0;height:0;border-left:4.5px solid transparent;border-right:4.5px solid transparent;border-top:6px solid #e0e0e0"></div>
<svg class="a" style="left:80px;top:193.5px" width="17" height="21" viewBox="0 0 17 21"><rect x="0" y="0" width="11" height="19" fill="#d8d9dc"/><path d="M2.5 4 H9 M2.5 6.7 H9 M2.5 9.3 H4.5" stroke="#5a5d66" stroke-width="1.2"/><circle cx="10.5" cy="14.5" r="5.6" fill="#2273e3"/><circle cx="10.5" cy="14.5" r="4.6" fill="#52c47c"/><path d="M9 12 L13 14.5 L9 17 Z" fill="#1b1e27"/></svg>
<div class="ti" style="left:100px;top:193.6px;letter-spacing:-0.2px;">YBTDN-cvknode-02</div>
<svg class="a" style="left:95px;top:220.4px" width="17" height="21" viewBox="0 0 17 21"><rect x="0" y="0" width="11" height="19" fill="#d8d9dc"/><path d="M3 4 L5.5 9 L8 4" fill="none" stroke="#1b1e27" stroke-width="1.6"/><circle cx="10.5" cy="14.5" r="5.6" fill="#1b1e27"/><circle cx="10.5" cy="14.5" r="4.6" fill="#52c47c"/><path d="M9 12 L13 14.5 L9 17 Z" fill="#1b1e27"/></svg>
<div class="ti" style="left:115px;top:220.5px;">app5-1</div>
<svg class="a" style="left:95px;top:248.4px" width="17" height="21" viewBox="0 0 17 21"><rect x="0" y="0" width="11" height="19" fill="#d8d9dc"/><path d="M3 4 L5.5 9 L8 4" fill="none" stroke="#1b1e27" stroke-width="1.6"/><circle cx="10.5" cy="14.5" r="5.6" fill="#1b1e27"/><circle cx="10.5" cy="14.5" r="4.6" fill="#52c47c"/><path d="M9 12 L13 14.5 L9 17 Z" fill="#1b1e27"/></svg>
<div class="ti" style="left:115px;top:248.5px;">cylgit</div>
<svg class="a" style="left:95px;top:276.0px" width="17" height="21" viewBox="0 0 17 21"><rect x="0" y="0" width="11" height="19" fill="#d8d9dc"/><path d="M3 4 L5.5 9 L8 4" fill="none" stroke="#1b1e27" stroke-width="1.6"/><circle cx="10.5" cy="14.5" r="5.6" fill="#1b1e27"/><circle cx="10.5" cy="14.5" r="4.6" fill="#52c47c"/><path d="M9 12 L13 14.5 L9 17 Z" fill="#1b1e27"/></svg>
<div class="ti" style="left:115px;top:276.1px;">Hadoop2</div>
<svg class="a" style="left:95px;top:304.0px" width="17" height="21" viewBox="0 0 17 21"><rect x="0" y="0" width="11" height="19" fill="#d8d9dc"/><path d="M3 4 L5.5 9 L8 4" fill="none" stroke="#1b1e27" stroke-width="1.6"/><circle cx="10.5" cy="14.5" r="5.6" fill="#1b1e27"/><circle cx="10.5" cy="14.5" r="4.6" fill="#52c47c"/><path d="M9 12 L13 14.5 L9 17 Z" fill="#1b1e27"/></svg>
<div class="ti" style="left:115px;top:304.1px;">safe-1</div>
<svg class="a" style="left:95px;top:332.0px" width="17" height="21" viewBox="0 0 17 21"><rect x="0" y="0" width="11" height="19" fill="#d8d9dc"/><path d="M3 4 L5.5 9 L8 4" fill="none" stroke="#1b1e27" stroke-width="1.6"/><circle cx="10.5" cy="14.5" r="5.6" fill="#1b1e27"/><circle cx="10.5" cy="14.5" r="4.6" fill="#52c47c"/><path d="M9 12 L13 14.5 L9 17 Z" fill="#1b1e27"/></svg>
<div class="ti" style="left:115px;top:332.1px;">safe-2</div>
<div class="a" style="left:65.5px;top:368.1px;width:0;height:0;border-left:4.5px solid transparent;border-right:4.5px solid transparent;border-top:6px solid #e0e0e0"></div>
<svg class="a" style="left:80px;top:360.6px" width="17" height="21" viewBox="0 0 17 21"><rect x="0" y="0" width="11" height="19" fill="#d8d9dc"/><path d="M2.5 4 H9 M2.5 6.7 H9 M2.5 9.3 H4.5" stroke="#5a5d66" stroke-width="1.2"/><circle cx="10.5" cy="14.5" r="5.6" fill="#1b1e27"/><circle cx="10.5" cy="14.5" r="4.6" fill="#52c47c"/><path d="M9 12 L13 14.5 L9 17 Z" fill="#1b1e27"/></svg>
<div class="ti" style="left:100px;top:360.7px;letter-spacing:-0.2px;">YBTDN-cvknode-03</div>
<svg class="a" style="left:95px;top:388.7px" width="17" height="21" viewBox="0 0 17 21"><rect x="0" y="0" width="11" height="19" fill="#d8d9dc"/><path d="M3 4 L5.5 9 L8 4" fill="none" stroke="#1b1e27" stroke-width="1.6"/><circle cx="10.5" cy="14.5" r="5.6" fill="#1b1e27"/><circle cx="10.5" cy="14.5" r="4.6" fill="#52c47c"/><path d="M9 12 L13 14.5 L9 17 Z" fill="#1b1e27"/></svg>
<div class="ti" style="left:115px;top:388.8px;">app7</div>
<div class="a" style="left:287px;top:0;width:7px;height:404px;background:#f1f1f4"></div>
<div class="a" style="left:287.2px;top:197px;width:6.4px;height:46px;background:#bfc2c6;border-radius:3.2px"></div>
</div>
</div>
<svg class="a" style="left:36px;top:580px" width="19" height="18" viewBox="0 0 19 18"><ellipse cx="9.5" cy="2.8" rx="9.2" ry="2.8" fill="#a5abb6"/><path d="M0.3 5 Q0.3 7.8 9.5 7.8 Q18.7 7.8 18.7 5 V8.2 Q18.7 11 9.5 11 Q0.3 11 0.3 8.2 Z" fill="#a5abb6"/><path d="M0.3 11.3 Q0.3 14 9.5 14 Q18.7 14 18.7 11.3 V14.8 Q18.7 17.8 9.5 17.8 Q0.3 17.8 0.3 14.8 Z" fill="#a5abb6"/></svg>
<div class="mi" style="top:581.0px">外部存储</div>
<svg class="a" style="left:36px;top:625px" width="19" height="16" viewBox="0 0 19 16"><rect x="0" y="0" width="18.5" height="2.3" fill="#a5abb6"/><rect x="0" y="3.4" width="18.5" height="12.6" fill="#a5abb6"/><rect x="11" y="0.7" width="1.3" height="1" fill="#262b37"/><rect x="13.5" y="0.7" width="1.3" height="1" fill="#262b37"/><rect x="16" y="0.7" width="1.3" height="1" fill="#262b37"/><path d="M6.5 7 L9.2 12.5 L12 7" fill="none" stroke="#262b37" stroke-width="1.8"/></svg>
<div class="mi" style="top:625.5px">虚拟机模板</div>
<svg class="a" style="left:36px;top:670px" width="19" height="18" viewBox="0 0 19 18"><path d="M0 0 H7 L9 2.3 H18.5 V3.6 H0 Z" fill="#a5abb6"/><rect x="0" y="4.6" width="18.5" height="13" fill="#a5abb6"/><path d="M6.5 8.5 L9.2 14 L12 8.5" fill="none" stroke="#262b37" stroke-width="1.8"/></svg>
<div class="mi" style="top:670.4px">虚拟机视图</div>
<svg class="a" style="left:36px;top:714px" width="19" height="21" viewBox="0 0 19 21"><rect x="6.5" y="0" width="6" height="2" fill="#a5abb6"/><rect x="0" y="2.6" width="18.5" height="2.2" fill="#a5abb6"/><path d="M1.5 5.8 H17 L15.6 20.5 H2.9 Z" fill="#a5abb6"/><path d="M6.5 10 L9.2 15.5 L12 10" fill="none" stroke="#262b37" stroke-width="1.8"/></svg>
<div class="mi" style="top:715.3px">虚拟机回收站</div>
<svg class="a" style="left:36px;top:760px" width="20" height="19" viewBox="0 0 20 19"><rect x="6.5" y="0" width="7" height="6" fill="#a5abb6"/><path d="M10 6 V9 M2.5 13 V9.3 H17.5 V13 M10 9 V13" fill="none" stroke="#a5abb6" stroke-width="1.4"/><rect x="0" y="12.5" width="5.2" height="6.2" fill="#a5abb6"/><rect x="7.4" y="12.5" width="5.2" height="6.2" fill="#a5abb6"/><rect x="14.8" y="12.5" width="5.2" height="6.2" fill="#a5abb6"/></svg>
<div class="mi" style="top:760.6px">虚拟化拓扑</div>
<svg class="a" style="left:37px;top:805px" width="21" height="16" viewBox="0 0 21 16"><path d="M11.5 12.5 H4 C1.8 12.5 0.3 11 0.3 9 C0.3 7 1.8 5.6 3.6 5.5 C4 2.5 6.3 0.3 9.3 0.3 C12 0.3 14.2 2 14.8 4.7 L11.5 12.5 Z" fill="#a5abb6"/><circle cx="15.5" cy="10.5" r="4" fill="none" stroke="#a5abb6" stroke-width="2.6" stroke-dasharray="1.6 1.1"/><circle cx="15.5" cy="10.5" r="3.3" fill="none" stroke="#a5abb6" stroke-width="1.6"/></svg>
<div class="mi" style="top:805.9px">外部云</div>
<div class="a" style="left:265.5px;top:767.6px;width:0;height:0;border-left:6.5px solid transparent;border-right:6.5px solid transparent;border-top:7.5px solid #a5abb6"></div>
<div class="a" style="left:265.5px;top:812.9px;width:0;height:0;border-left:6.5px solid transparent;border-right:6.5px solid transparent;border-top:7.5px solid #a5abb6"></div>
<svg class="a" style="left:96px;top:863px" width="21" height="16" viewBox="0 0 21 16"><rect x="0" y="0" width="20" height="1.8" fill="#fff"/><rect x="0" y="14.2" width="20" height="1.8" fill="#fff"/><rect x="0" y="4.5" width="11" height="1.8" fill="#fff"/><rect x="0" y="7.2" width="11" height="1.8" fill="#fff"/><rect x="0" y="9.9" width="11" height="1.8" fill="#fff"/><path d="M19.5 2.5 V13.5 L12.5 8 Z" fill="#fff"/></svg>
<div class="a" style="left:135px;top:862px;font-size:15px;line-height:20px;font-weight:bold;color:#2b7de9">收缩菜单</div>
<div class="a" style="left:0;top:0;width:1920px;height:1px;background:#bdbdbd"></div>
</body></html>
